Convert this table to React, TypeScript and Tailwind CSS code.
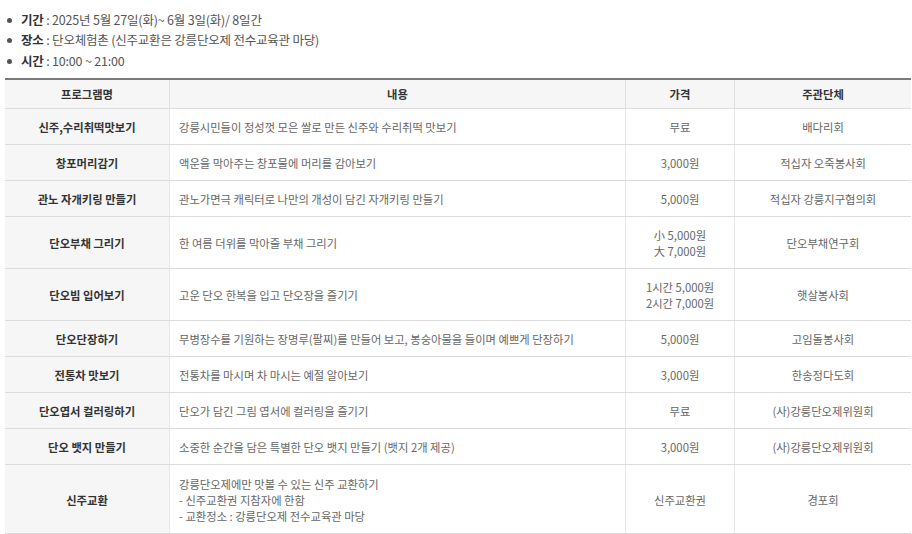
import React from "react";

type Row = {
  name: string;
  content: string[];
  price: string[];
  org: string;
};

const rows: Row[] = [
  { name: "신주,수리취떡맛보기", content: ["강릉시민들이 정성껏 모은 쌀로 만든 신주와 수리취떡 맛보기"], price: ["무료"], org: "배다리회" },
  { name: "창포머리감기", content: ["액운을 막아주는 창포물에 머리를 감아보기"], price: ["3,000원"], org: "적십자 오죽봉사회" },
  { name: "관노 자개키링 만들기", content: ["관노가면극 캐릭터로 나만의 개성이 담긴 자개키링 만들기"], price: ["5,000원"], org: "적십자 강릉지구협의회" },
  { name: "단오부채 그리기", content: ["한 여름 더위를 막아줄 부채 그리기"], price: ["小 5,000원", "大 7,000원"], org: "단오부채연구회" },
  { name: "단오빔 입어보기", content: ["고운 단오 한복을 입고 단오장을 즐기기"], price: ["1시간 5,000원", "2시간 7,000원"], org: "햇살봉사회" },
  { name: "단오단장하기", content: ["무병장수를 기원하는 장명루(팔찌)를 만들어 보고, 봉숭아물을 들이며 예쁘게 단장하기"], price: ["5,000원"], org: "고임돌봉사회" },
  { name: "전통차 맛보기", content: ["전통차를 마시며 차 마시는 예절 알아보기"], price: ["3,000원"], org: "한송정다도회" },
  { name: "단오엽서 컬러링하기", content: ["단오가 담긴 그림 엽서에 컬러링을 즐기기"], price: ["무료"], org: "(사)강릉단오제위원회" },
  { name: "단오 뱃지 만들기", content: ["소중한 순간을 담은 특별한 단오 뱃지 만들기 (뱃지 2개 제공)"], price: ["3,000원"], org: "(사)강릉단오제위원회" },
  {
    name: "신주교환",
    content: ["강릉단오제에만 맛볼 수 있는 신주 교환하기", "- 신주교환권 지참자에 한함", "- 교환정소 : 강릉단오제 전수교육관 마당"],
    price: ["신주교환권"],
    org: "경포회",
  },
];

const info = [
  { label: "기간", value: "2025년 5월 27일(화)~ 6월 3일(화)/ 8일간" },
  { label: "장소", value: "단오체험촌 (신주교환은 강릉단오제 전수교육관 마당)" },
  { label: "시간", value: "10:00 ~ 21:00" },
];

export default function App() {
  return (
    <div
      className="w-[912px] h-[534px] overflow-hidden bg-white"
      style={{ fontFamily: '"Noto Sans CJK KR", "Noto Sans", sans-serif' }}
    >
      <ul className="pt-[10px] pl-[7px]">
        {info.map((i) => (
          <li key={i.label} className="flex items-center h-[20.5px] text-[12.5px] tracking-[-0.2px] text-[#555]">
            <span className="w-[5px] h-[5px] rounded-full bg-[#555] mr-[9px]" />
            <span className="font-bold text-[#333]">{i.label}</span>
            <span>&nbsp;: {i.value}</span>
          </li>
        ))}
      </ul>
      <div className="ml-[5px] mt-[6px] w-[906px] border-t-2 border-[#7a7a7a] text-[11.3px] leading-[16px]">
        <div className="grid grid-cols-[164px_456px_109px_177px] bg-[#f6f6f6] border-b border-[#dcdcdc] font-bold text-[#333]">
          <div className="pt-[6px] pb-[6px] text-center">프로그램명</div>
          <div className="pt-[6px] pb-[6px] text-center border-l border-[#e0e0e0]">내용</div>
          <div className="pt-[6px] pb-[6px] text-center border-l border-[#e0e0e0]">가격</div>
          <div className="pt-[6px] pb-[6px] text-center border-l border-[#e0e0e0]">주관단체</div>
        </div>
        {rows.map((r, idx) => (
          <div key={r.name} className="grid grid-cols-[164px_456px_109px_177px] border-b border-[#dcdcdc] text-[#666]">
            <div className={`${idx === 9 ? "pt-[11px]" : "pt-[10px]"} pb-[9px] bg-[#f6f6f6] font-bold text-[#333] flex items-center justify-center`}>
              {r.name}
            </div>
            <div className={`${idx === 9 ? "pt-[11px]" : "pt-[10px]"} pb-[9px] pl-[9px] border-l border-[#e8e8e8] flex flex-col justify-center`}>
              {r.content.map((c) => (
                <div key={c}>{c}</div>
              ))}
            </div>
            <div className={`${idx === 9 ? "pt-[11px]" : "pt-[10px]"} pb-[9px] border-l border-[#e8e8e8] flex flex-col items-center justify-center`}>
              {r.price.map((p) => (
                <div key={p}>{p}</div>
              ))}
            </div>
            <div className={`${idx === 9 ? "pt-[11px]" : "pt-[10px]"} pb-[9px] border-l border-[#e8e8e8] flex items-center justify-center`}>
              {r.org}
            </div>
          </div>
        ))}
      </div>
    </div>
  );
}
